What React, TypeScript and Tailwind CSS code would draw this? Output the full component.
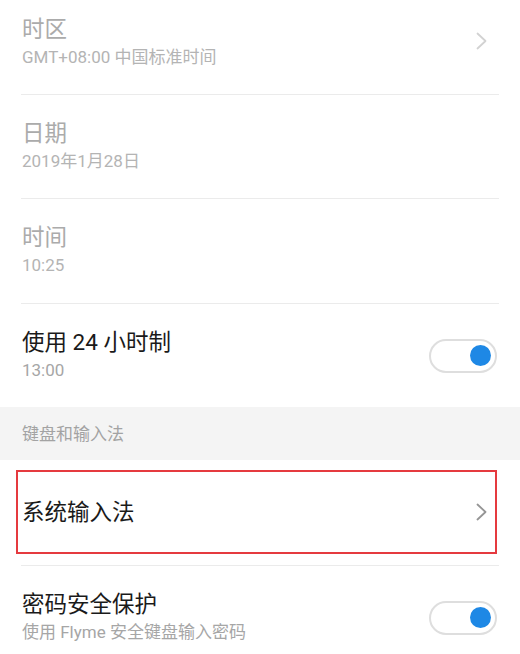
import React from "react";

const font = { fontFamily: 'Roboto, "Noto Sans CJK SC", sans-serif' };

function Chevron({ color }: { color: string }) {
  return (
    <svg width="13" height="18" viewBox="0 0 13 18" fill="none">
      <path d="M2.5 1.5 L10.5 9 L2.5 16.5" stroke={color} strokeWidth="1.8" strokeLinecap="round" strokeLinejoin="round" />
    </svg>
  );
}

function Toggle() {
  return (
    <div className="w-[68px] h-[34px] rounded-full border-2 border-[#dedede] bg-white flex items-center justify-end pr-[4px]">
      <div className="w-[21px] h-[21px] rounded-full bg-[#1e88e5]" />
    </div>
  );
}

function Divider() {
  return <div className="mx-[21px] h-px bg-[#ebebeb]" />;
}

function Row({
  title,
  sub,
  pt,
  h,
}: {
  title: string;
  sub: string;
  pt: string;
  h: string;
}) {
  return (
    <div className={`flex items-start ${h}`}>
      <div className={`flex-1 pl-[22px] ${pt}`}>
        <div className="text-[22.5px] leading-[28px] text-[#ababab]">{title}</div>
        <div className="mt-[3px] text-[17px] leading-[22px] text-[#b4b4b4]">{sub}</div>
      </div>
    </div>
  );
}

export default function App() {
  return (
    <div className="w-[520px] h-[654px] overflow-hidden bg-white" style={font}>
      <div className="flex items-start h-[94px]">
        <div className="flex-1 pl-[22px] pt-[15px]">
          <div className="text-[22.5px] leading-[28px] text-[#ababab]">时区</div>
          <div className="mt-[3px] text-[17px] leading-[22px] text-[#b4b4b4]">GMT+08:00 中国标准时间</div>
        </div>
        <div className="pt-[32px] pr-[32px]">
          <Chevron color="#d2d2d2" />
        </div>
      </div>
      <Divider />
      <Row title="日期" sub="2019年1月28日" pt="pt-[24px]" h="h-[103px]" />
      <Divider />
      <Row title="时间" sub="10:25" pt="pt-[24px]" h="h-[104px]" />
      <Divider />
      <div className="flex items-center h-[103px]">
        <div className="flex-1 pl-[22px] -mt-[2px]">
          <div className="text-[22.5px] leading-[28px] text-[#1a1a1a]">使用 24 小时制</div>
          <div className="mt-[3px] text-[17px] leading-[22px] text-[#a6a6a6]">13:00</div>
        </div>
        <div className="pr-[23px]">
          <Toggle />
        </div>
      </div>
      <div className="h-[53px] bg-[#f4f4f4] flex items-center pl-[22px]">
        <span className="text-[17px] leading-[22px] text-[#a3a3a3]">键盘和输入法</span>
      </div>
      <div className="pt-[10px] pb-[11px]">
        <div className="ml-[16px] mr-[23px] h-[84px] border-2 border-[#e53a3f] flex items-center pl-[4px] pr-[7px]">
          <span className="flex-1 text-[22.5px] leading-[28px] text-[#1a1a1a]">系统输入法</span>
          <Chevron color="#959595" />
        </div>
      </div>
      <Divider />
      <div className="flex items-center h-[103px]">
        <div className="flex-1 pl-[22px] -mt-[2px]">
          <div className="text-[22.5px] leading-[28px] text-[#1a1a1a]">密码安全保护</div>
          <div className="mt-[3px] text-[17px] leading-[22px] text-[#a6a6a6]">使用 Flyme 安全键盘输入密码</div>
        </div>
        <div className="pr-[23px]">
          <Toggle />
        </div>
      </div>
    </div>
  );
}
